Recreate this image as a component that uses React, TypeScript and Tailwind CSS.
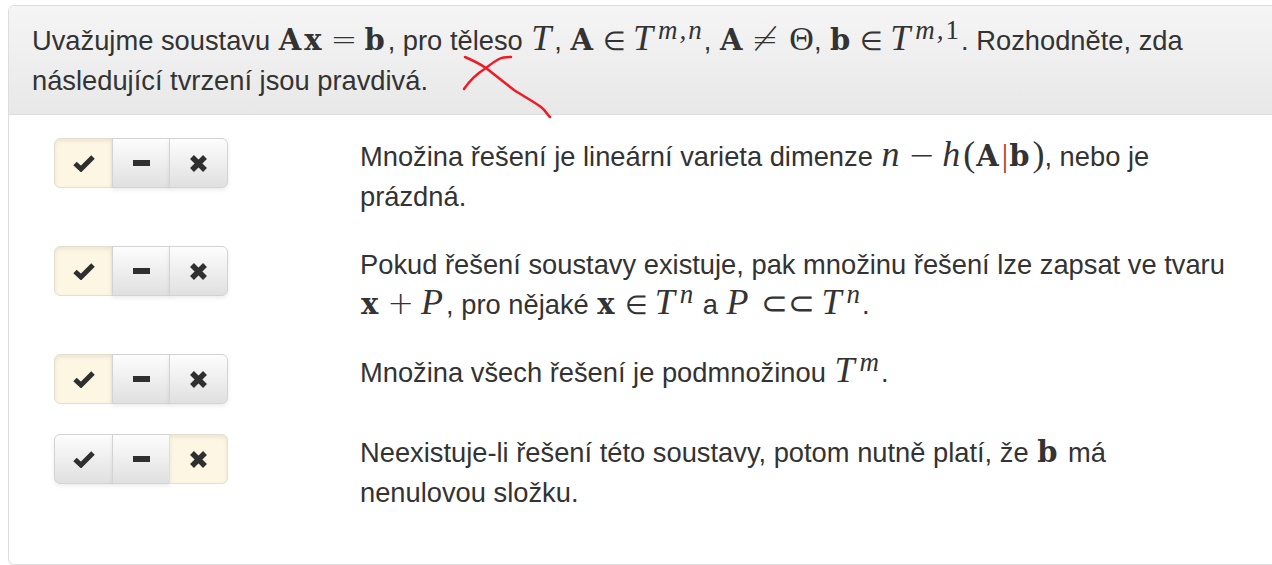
import React from 'react'

type Answer = 'yes' | 'skip' | 'no'

// math glyphs use leading-[0] so the big sizes don't stretch the 40px text lines
const B: React.FC<{ children: React.ReactNode }> = ({ children }) => (
  <span className="font-['DejaVu_Serif',serif] text-[29px] leading-[0] font-bold tracking-[3px] ml-[1px]">{children}</span>
)
const I: React.FC<{ children: React.ReactNode }> = ({ children }) => (
  <span className="font-['Liberation_Serif',serif] text-[36px] leading-[0] italic tracking-[2px] mx-[1px]">{children}</span>
)
const P: React.FC<{ children: React.ReactNode }> = ({ children }) => (
  <span className="font-['Liberation_Serif',serif] text-[36px] leading-[0]">{children}</span>
)
const R: React.FC<{ children: React.ReactNode }> = ({ children }) => (
  <span className="font-['DejaVu_Sans',sans-serif] text-[32px] leading-[0] font-extralight mx-[6px]">{children}</span>
)
const E: React.FC<{ children: React.ReactNode }> = ({ children }) => (
  <span className="font-['DejaVu_Sans',sans-serif] text-[26px] leading-[0] font-extralight ml-[7px] mr-[6px]">{children}</span>
)
const Sup: React.FC<{ children: React.ReactNode; upright?: boolean }> = ({ children, upright }) => (
  <span className={`font-['Liberation_Serif',serif] text-[27px] leading-[0] align-[11px] tracking-[2px] ${upright ? '' : 'italic ml-[2px]'}`}>{children}</span>
)

const CheckIcon = () => (
  <svg width="22" height="18" viewBox="0 0 22 18" fill="none">
    <path d="M2 9.5 L8 15 L20 3" stroke="#2f2f2f" strokeWidth="5" />
  </svg>
)
const MinusIcon = () => (
  <svg width="17" height="6" viewBox="0 0 17 6">
    <rect width="17" height="6" fill="#2f2f2f" />
  </svg>
)
const CrossIcon = () => (
  <svg width="19" height="19" viewBox="0 0 19 19" fill="none">
    <path d="M3 3 L16 16 M16 3 L3 16" stroke="#2f2f2f" strokeWidth="5.5" />
  </svg>
)

const cell = (active: boolean) =>
  `flex items-center justify-center h-[50px] border ${
    active
      ? 'bg-[#fdf6e3] shadow-[inset_0_2px_4px_rgba(0,0,0,0.08)] border-[#e4dfcf]'
      : 'border-[#d3d3d3] bg-gradient-to-b from-[#fdfdfd] to-[#e0e0e0] shadow-[0_2px_4px_rgba(0,0,0,0.08)]'
  }`

const AnswerGroup: React.FC<{ value: Answer }> = ({ value }) => (
  <div className="flex w-[174px] ml-[45px]">
    <div className={`${cell(value === 'yes')} w-[59px] rounded-l-[6px]`}>
      <CheckIcon />
    </div>
    <div className={`${cell(value === 'skip')} w-[58px] -ml-[1px]`}>
      <MinusIcon />
    </div>
    <div className={`${cell(value === 'no')} w-[59px] -ml-[1px] rounded-r-[6px]`}>
      <CrossIcon />
    </div>
  </div>
)

const Row: React.FC<{ value: Answer; children: React.ReactNode }> = ({ value, children }) => (
  <div className="flex items-start">
    <div className="w-[351px] flex-shrink-0 pb-[30px]">
      <AnswerGroup value={value} />
    </div>
    <div className="w-[880px] pb-[29px] leading-[40px] -mt-[1px]">{children}</div>
  </div>
)

export default function App() {
  return (
    <div className="relative w-[1272px] h-[565px] overflow-hidden bg-white font-['Liberation_Sans',sans-serif] text-[27.3px] text-[#333]">
      <div className="ml-[8px] mt-[5px] w-[1280px] h-[560px] rounded-[6px] border border-[#ddd] overflow-hidden shadow-[0_1px_1px_rgba(0,0,0,0.05)]">
        <div className="h-[109px] pl-[23px] pt-[15px] leading-[40px] border-b border-[#ddd] bg-gradient-to-b from-[#f5f5f5] to-[#e8e8e8]">
          <div className="w-[1220px]">
            Uvažujme soustavu <B>Ax</B><R>=</R><B>b</B>, pro těleso <I>T</I>, <B>A</B><E>∈</E><I>T</I>
            <Sup>m,n</Sup>, <B>A</B><R>≠</R><span className="font-['Liberation_Serif',serif] text-[34px] leading-[0] ml-[5px]">Θ</span>, <B>b</B><E>∈</E><I>T</I><Sup>m,</Sup><Sup upright>1</Sup>. Rozhodněte, zda následující tvrzení jsou pravdivá.
          </div>
        </div>
        <div className="pt-[23px]">
          <Row value="yes">
            Množina řešení je lineární varieta dimenze <I>n</I><R>−</R><I>h</I>
            <P>(</P><B>A</B>
            <span className="text-[#b03030] font-['Liberation_Serif',serif] text-[32px] leading-[0]">|</span>
            <B>b</B><P>)</P>, nebo je prázdná.
          </Row>
          <Row value="yes">
            Pokud řešení soustavy existuje, pak množinu řešení lze zapsat ve tvaru<br />
            <B>x</B><R>+</R><I>P</I>, pro nějaké <B>x</B><E>∈</E><I>T</I><Sup>n</Sup> a <I>P</I><span className="ml-[3px]"><R>⊂⊂</R></span><I>T</I><Sup>n</Sup>.
          </Row>
          <Row value="yes">
            Množina všech řešení je podmnožinou <I>T</I><Sup>m</Sup>.
          </Row>
          <Row value="no">
            Neexistuje-li řešení této soustavy, potom nutně platí, že <B>b</B> má<br />nenulovou složku.
          </Row>
        </div>
      </div>

      {/* red pen mark over the header */}
      <svg className="absolute left-0 top-0 pointer-events-none" width="1272" height="130" fill="none">
        <path d="M464 89 C470 80 478 73 486 68 C491 64 495 61 499 59 C503 57 507 57 511 57" stroke="#f01a24" strokeWidth="2.5" strokeLinecap="round" />
        <path d="M465 57 C472 60 480 64 486 68 C495 75 505 83 514 90 C523 96 533 101 541 107 C545 110 547 114 550 117" stroke="#f01a24" strokeWidth="2.5" strokeLinecap="round" />
      </svg>
    </div>
  )
}
